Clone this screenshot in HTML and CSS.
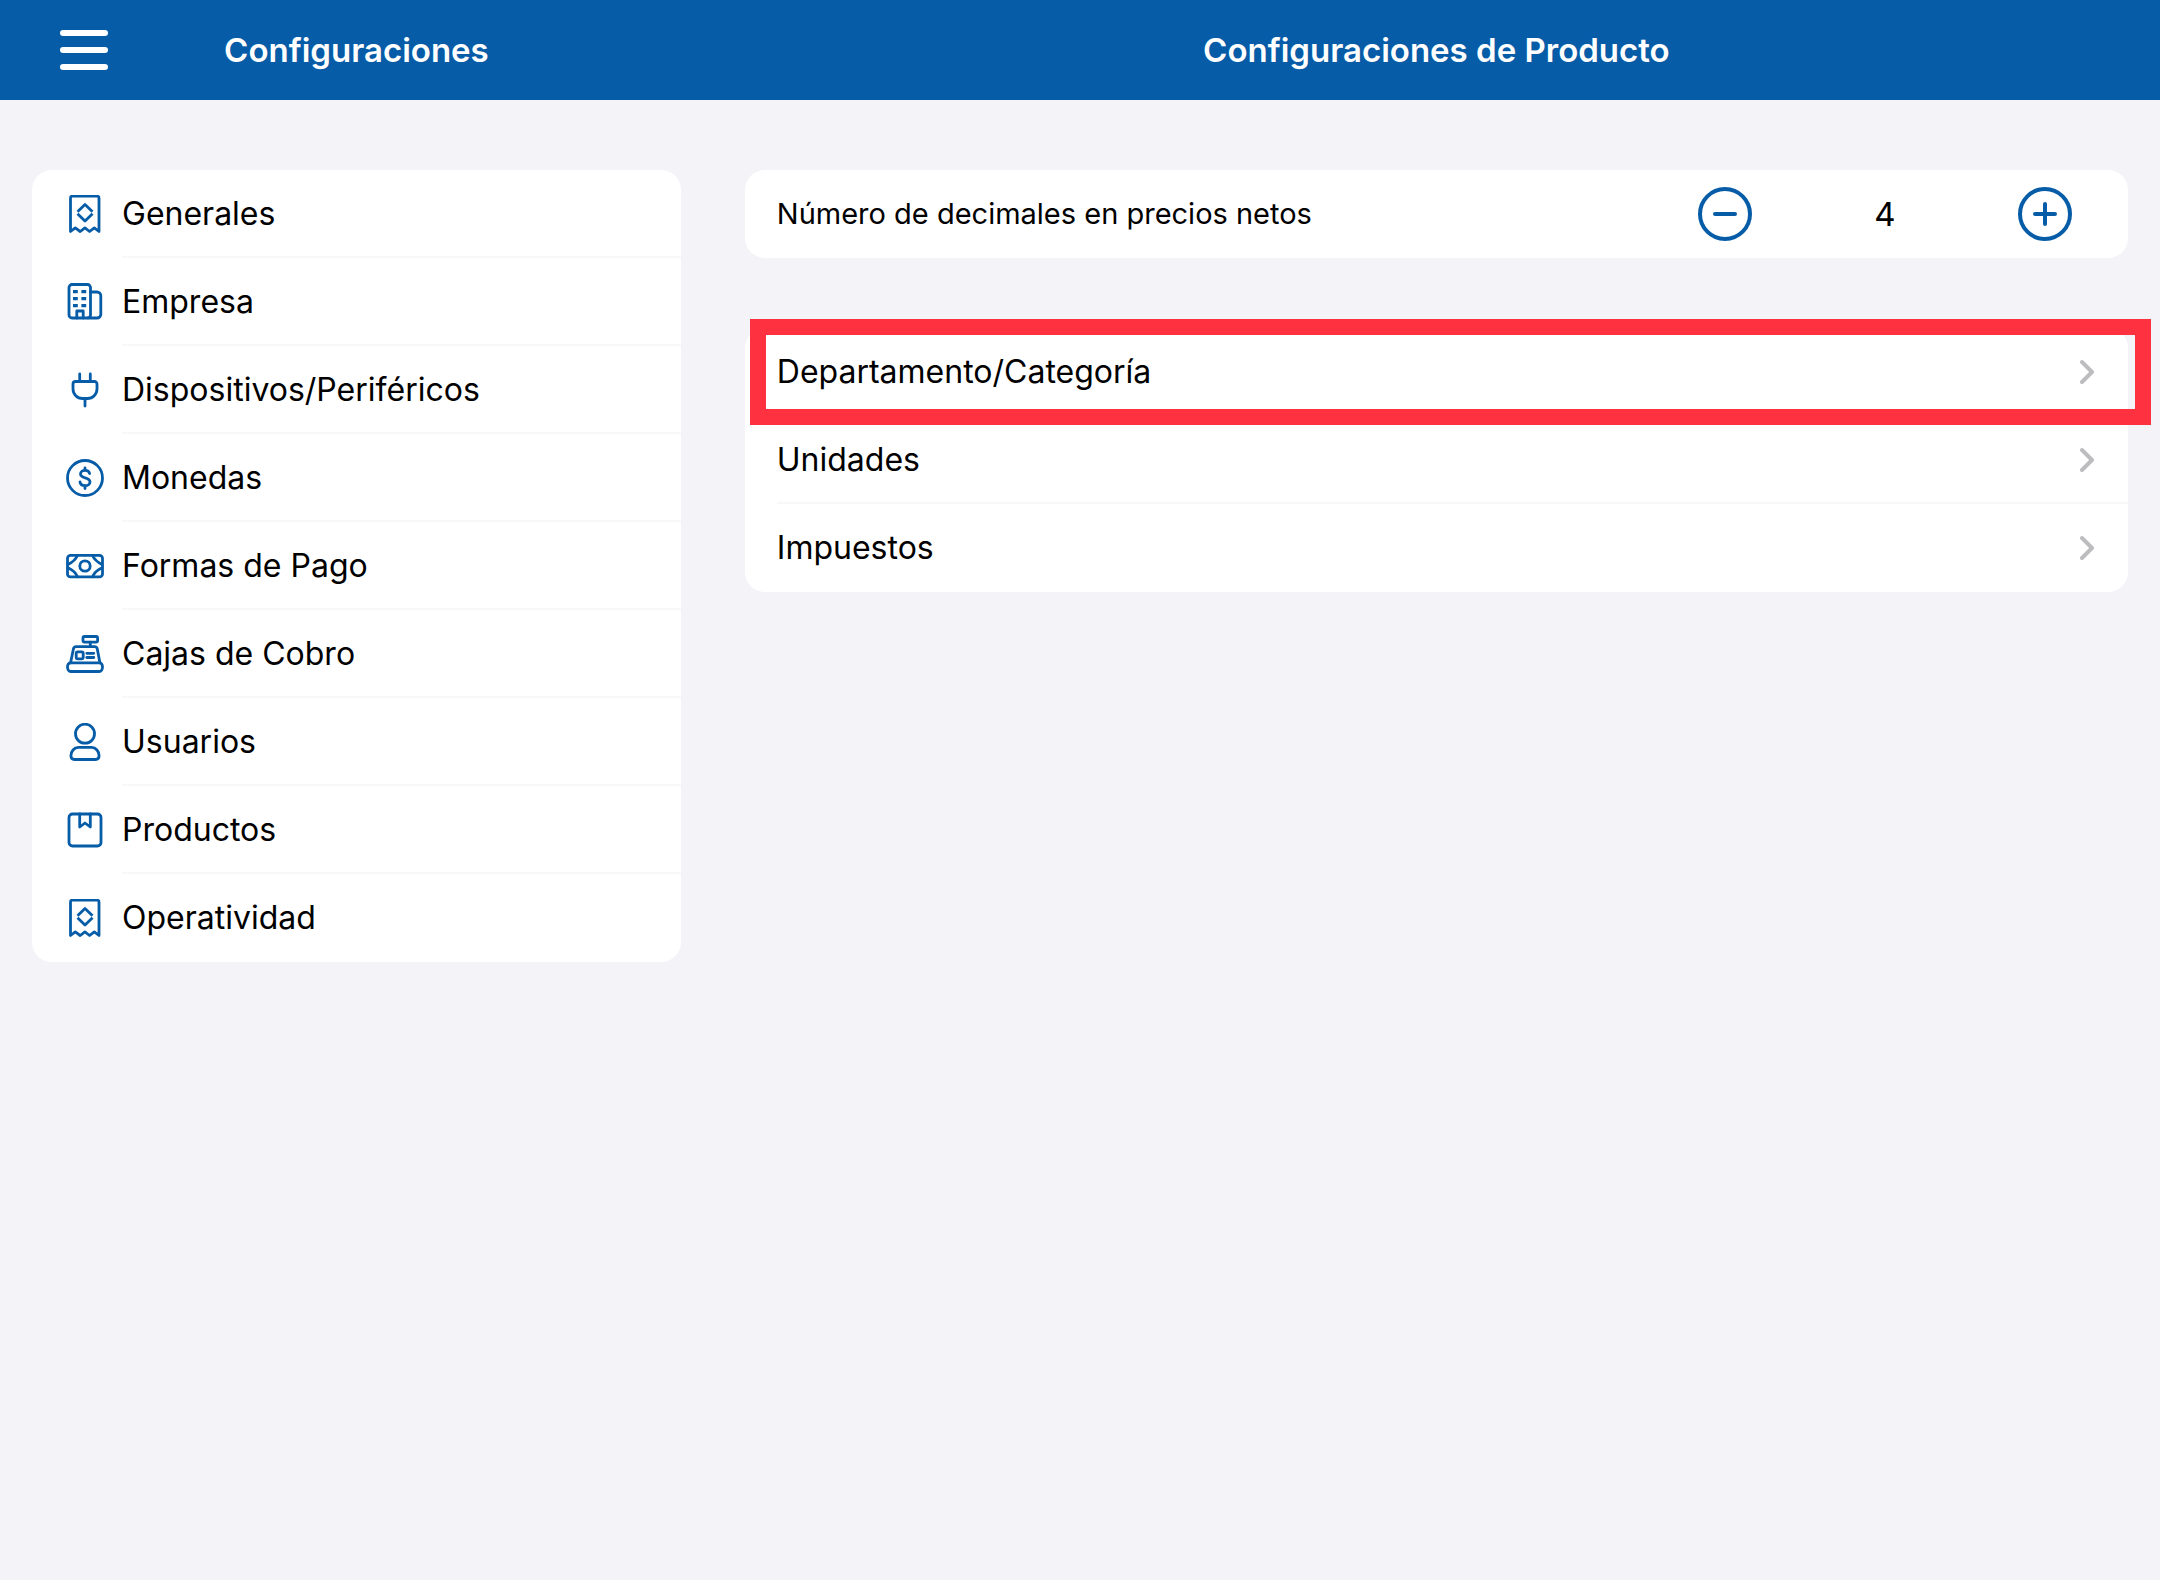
FILE: index.html
```html
<!DOCTYPE html>
<html lang="es">
<head>
<meta charset="utf-8">
<meta name="viewport" content="width=device-width, initial-scale=1">
<title>Configuraciones de Producto</title>
<link rel="stylesheet" href="styles.css">
</head>
<body>
<svg class="sprite" aria-hidden="true">
  <symbol id="i-receipt" viewBox="0 0 38 38">
    <path d="M4.500 36.500V3a1.800 1.800 0 0 1 1.800-1.800h24.900a1.800 1.800 0 0 1 1.800 1.800v33.500l-4.700-3.600-4.700 3.600-4.700-3.600-4.700 3.600-4.900-3.600z"/>
    <path stroke-linecap="butt" d="M11.500 16.700l7.500-7.200 7.500 7.200M11.500 18.700l7.500 7.200 7.500-7.200"/>
  </symbol>
  <symbol id="i-building" viewBox="0 0 38 38">
    <rect x="3" y="1.500" width="21.500" height="33.500" rx="3"/>
    <path d="M24.500 9H31a3.800 3.800 0 0 1 3.800 3.800v18.400A3.800 3.800 0 0 1 31 35h-9M10.800 35v-7h6.400v7"/>
    <path class="solid" d="M7 7h4.800v3.200H7zM15.400 7h4.800v3.200h-4.800zM7 14h4.800v3.200H7zM15.400 14h4.800v3.200h-4.800zM7 21h4.800v3.200H7zM15.400 21h4.800v3.200h-4.800z"/>
  </symbol>
  <symbol id="i-plug" viewBox="0 0 38 38">
    <path d="M13.700 3v7.500M24.300 3v7.500M19 27.500V35M9.500 10.500h19a2.500 2.500 0 0 1 2.500 2.500v5a9.500 9.500 0 0 1-9.500 9.500h-5A9.500 9.500 0 0 1 7 18v-5a2.500 2.500 0 0 1 2.500-2.500z"/>
  </symbol>
  <symbol id="i-coin" viewBox="0 0 38 38">
    <circle cx="19" cy="19" r="17.500"/>
    <path d="M23.600 14.600c-.4-2-2.200-3.200-4.600-3.200s-4.500 1.400-4.500 3.600c0 5 9.500 2.800 9.500 8 0 2.300-2.200 3.700-4.900 3.700-2.800 0-4.800-1.400-5.100-3.700M19 9v2.400M19 26.700V29.500"/>
  </symbol>
  <symbol id="i-cash" viewBox="0 0 38 38">
    <rect x="1.500" y="8.300" width="35" height="21.600" rx="3"/>
    <circle cx="19" cy="19" r="5.200"/>
    <path d="M11.500 8.500Q9 14 2 17.500M11.500 29.700Q9 24 2 20.700M26.500 8.500Q29 14 36 17.500M26.500 29.700Q29 24 36 20.700"/>
  </symbol>
  <symbol id="i-register" viewBox="0 0 38 38">
    <rect x="17" y="1.500" width="14.600" height="5.600" rx="1.500"/>
    <path d="M24.300 7.100v4.600M4.600 27.800L7.400 14a2.800 2.800 0 0 1 2.700-2.300h18.500a2.800 2.800 0 0 1 2.700 2.300l2.600 13.800M20.800 18.300h7M20.800 22.500h7"/>
    <rect x="10.200" y="16.800" width="7" height="7" rx="1.500"/>
    <path d="M4.800 27.800h28.400c2 0 3.300 1.800 3.300 4.200s-1.300 4.500-3.300 4.500H4.800c-2 0-3.300-2-3.300-4.500s1.300-4.200 3.300-4.200z"/>
  </symbol>
  <symbol id="i-user" viewBox="0 0 38 38">
    <circle cx="19" cy="10.700" r="9.500"/>
    <path d="M12.500 24.400h13c4.500 0 7.600 4.100 7.600 8.400 0 2.200-1.400 3.700-3.600 3.700h-21c-2.200 0-3.600-1.500-3.600-3.700 0-4.300 3.100-8.400 7.600-8.400z"/>
  </symbol>
  <symbol id="i-box" viewBox="0 0 38 38">
    <rect x="3" y="3" width="32" height="32" rx="3.500"/>
    <path d="M13.700 3v13l5.300-4 5.300 4V3"/>
  </symbol>
  <symbol id="i-chevron" viewBox="0 0 16 26">
    <path d="M2 3l10 10L2 23"/>
  </symbol>
</svg>

<header class="topbar">
  <div class="topbar-side">
    <button class="menu-button" type="button" aria-label="Menú"><span></span><span></span><span></span></button>
    <h2 class="title">Configuraciones</h2>
  </div>
  <h1 class="title">Configuraciones de Producto</h1>
</header>

<div class="layout">
  <nav class="pane">
    <ul class="card nav-list">
      <li><a class="row" href="#generales"><svg class="icon"><use href="#i-receipt"/></svg>Generales</a></li>
      <li><a class="row" href="#empresa"><svg class="icon"><use href="#i-building"/></svg>Empresa</a></li>
      <li><a class="row" href="#dispositivos"><svg class="icon"><use href="#i-plug"/></svg>Dispositivos/Periféricos</a></li>
      <li><a class="row" href="#monedas"><svg class="icon"><use href="#i-coin"/></svg>Monedas</a></li>
      <li><a class="row" href="#pago"><svg class="icon"><use href="#i-cash"/></svg>Formas de Pago</a></li>
      <li><a class="row" href="#cajas"><svg class="icon"><use href="#i-register"/></svg>Cajas de Cobro</a></li>
      <li><a class="row" href="#usuarios"><svg class="icon"><use href="#i-user"/></svg>Usuarios</a></li>
      <li><a class="row" href="#productos"><svg class="icon"><use href="#i-box"/></svg>Productos</a></li>
      <li><a class="row" href="#operatividad"><svg class="icon"><use href="#i-receipt"/></svg>Operatividad</a></li>
    </ul>
  </nav>

  <main class="pane">
    <section class="card row decimals">
      <span class="decimals-label" id="decimals-label">Número de decimales en precios netos</span>
      <div class="stepper" role="group" aria-labelledby="decimals-label">
        <button class="step" type="button" aria-label="Disminuir"><svg viewBox="0 0 54 54"><circle cx="27" cy="27" r="25"/><path d="M17 27h20"/></svg></button>
        <output class="value">4</output>
        <button class="step" type="button" aria-label="Aumentar"><svg viewBox="0 0 54 54"><circle cx="27" cy="27" r="25"/><path d="M17 27h20M27 17v20"/></svg></button>
      </div>
    </section>

    <ul class="card option-list">
      <li class="highlighted"><a class="row" href="#departamento">Departamento/Categoría<svg class="chevron"><use href="#i-chevron"/></svg></a></li>
      <li><a class="row" href="#unidades">Unidades<svg class="chevron"><use href="#i-chevron"/></svg></a></li>
      <li><a class="row" href="#impuestos">Impuestos<svg class="chevron"><use href="#i-chevron"/></svg></a></li>
    </ul>
  </main>
</div>
</body>
</html>
```
FILE: styles.css
```css
:root {
  --blue: #075ca8;
  --background: #f3f3f8;
  --separator: #f8f8f9;
  --highlight: #fe3141;
}

* {
  box-sizing: border-box;
}

body {
  margin: 0;
  min-height: 100vh;
  background: var(--background);
  color: #000;
  font-family: Inter, "Liberation Sans", sans-serif;
  font-size: 32px;
  line-height: 40px;
}

ul {
  margin: 0;
  padding: 0;
  list-style: none;
}

button {
  padding: 0;
  border: 0;
  background: none;
}

.sprite {
  position: absolute;
  width: 0;
  height: 0;
}

.topbar,
.layout {
  display: grid;
  grid-template-columns: 33fr 67fr;
}

.topbar {
  align-items: center;
  height: 100px;
  background: var(--blue);
  color: #fff;
}

.topbar-side {
  display: grid;
  grid-template-columns: 48px 1fr 48px;
  align-items: center;
  padding: 0 60px;
}

.title {
  margin: 0;
  font-size: 33px;
  font-weight: 600;
  text-align: center;
}

.menu-button {
  display: flex;
  flex-direction: column;
  gap: 11px;
}

.menu-button span {
  width: 48px;
  height: 6px;
  border-radius: 3px;
  background: #fff;
}

.pane {
  padding: 70px 32px;
}

.card {
  border-radius: 20px;
  background: #fff;
}

.row {
  display: flex;
  align-items: center;
  height: 88px;
  padding: 0 32px;
  color: inherit;
  text-decoration: none;
}

.nav-list .row {
  gap: 18px;
  padding: 0 34px;
}

li:not(:last-child) .row {
  background: linear-gradient(var(--separator), var(--separator)) right bottom / calc(100% - 32px) 2px no-repeat;
}

.nav-list li:not(:last-child) .row {
  background-size: calc(100% - 90px) 2px;
}

.icon {
  width: 38px;
  height: 38px;
  fill: none;
  stroke: var(--blue);
  stroke-width: 2.8;
  stroke-linecap: round;
  stroke-linejoin: round;
}

.solid {
  fill: var(--blue);
  stroke: none;
}

.decimals {
  justify-content: space-between;
  margin-bottom: 70px;
  padding-right: 56px;
}

.decimals-label {
  font-size: 29px;
}

.stepper {
  display: flex;
  align-items: center;
  justify-content: space-between;
  width: 374px;
}

.step {
  width: 54px;
  height: 54px;
}

.step svg {
  display: block;
  fill: none;
  stroke: var(--blue);
  stroke-width: 4;
  stroke-linecap: round;
}

.value {
  font-size: 33px;
}

.option-list .row {
  justify-content: space-between;
}

.chevron {
  width: 16px;
  height: 26px;
  fill: none;
  stroke: #bdbdbf;
  stroke-width: 4;
  stroke-linecap: round;
  stroke-linejoin: round;
}

.highlighted {
  position: relative;
}

.highlighted::after {
  content: "";
  position: absolute;
  inset: -9px -23px -9px 5px;
  z-index: 1;
  border: 16px solid var(--highlight);
  pointer-events: none;
}
```
